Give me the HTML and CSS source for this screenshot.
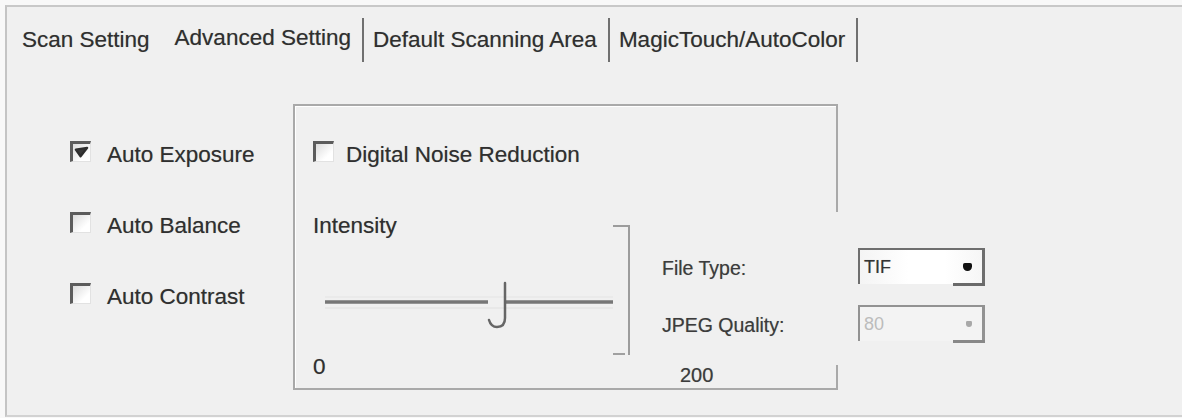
FILE: index.html
```
<!DOCTYPE html>
<html>
<head>
<meta charset="utf-8">
<title>Advanced Setting</title>
<link rel="stylesheet" href="styles.css">
</head>
<body>
<div class="dialog">
  <div class="tabs">
    <span class="tab first">Scan Setting</span>
    <span class="tab active">Advanced Setting</span>
    <span class="sep"></span>
    <span class="tab">Default Scanning Area</span>
    <span class="sep"></span>
    <span class="tab">MagicTouch/AutoColor</span>
    <span class="sep"></span>
  </div>
  <div class="main">
    <div class="auto-col">
      <div class="check-row">
        <span class="box checked"><svg viewBox="0 0 18 18" width="17" height="17"><path d="M3 6 L8 13 L15 4 Z" fill="#3a3a3a" stroke="#2e2e2e" stroke-width="2.4" stroke-linejoin="round"/></svg></span>
        <span>Auto Exposure</span>
      </div>
      <div class="check-row">
        <span class="box"></span>
        <span>Auto Balance</span>
      </div>
      <div class="check-row">
        <span class="box"></span>
        <span>Auto Contrast</span>
      </div>
    </div>
    <div class="group">
      <div class="check-row dnr">
        <span class="box"></span>
        <span>Digital Noise Reduction</span>
      </div>
      <div class="intensity">
        <div class="slider-main">
          <div class="lbl">Intensity</div>
          <svg class="track" viewBox="0 0 300 111" width="300" height="111">
            <line x1="12" y1="53" x2="300" y2="53" stroke="#e8e8e8" stroke-width="1.5"/>
            <line x1="12" y1="64" x2="300" y2="64" stroke="#e6e6e6" stroke-width="1.5"/>
            <line x1="12" y1="58" x2="175" y2="58" stroke="#777777" stroke-width="3.5"/>
            <line x1="192" y1="58" x2="300" y2="58" stroke="#777777" stroke-width="3.5"/>
            <path d="M192 39 V74 Q192 83 184 83 Q178 83 176 76" fill="none" stroke="#666666" stroke-width="2.5" stroke-linecap="round"/>
          </svg>
        </div>
        <div class="bracket"></div>
      </div>
      <div class="scale">
        <span class="min">0</span>
        <span class="max">200</span>
      </div>
    </div>
    <div class="output-panel">
      <span class="out-label">File Type:</span>
      <div class="combo"><span>TIF</span><span class="arrow"></span></div>
      <span class="out-label">JPEG Quality:</span>
      <div class="combo disabled"><span>80</span><span class="arrow"></span></div>
    </div>
  </div>
</div>
</body>
</html>
```
FILE: styles.css
```
html, body {
  margin: 0;
  padding: 0;
}
body {
  width: 1182px;
  height: 418px;
  overflow: hidden;
  background: #f8f8f8;
  font-family: "Liberation Sans", Arial, sans-serif;
  font-size: 22.5px;
  color: #2f2f2f;
  text-shadow: 0 0 0.7px rgba(0, 0, 0, 0.35);
}
.dialog {
  margin: 5px 0 0 5px;
  height: 412px;
  box-sizing: border-box;
  border-top: 2px solid #c8c8c8;
  border-left: 2px solid #c4c4c4;
  border-bottom: 2px solid #d2d2d2;
  background: #f0f0f0;
}
.tabs {
  display: flex;
  align-items: stretch;
  height: 44px;
  padding: 11px 0 0 15px;
}
.tab {
  line-height: 44px;
  white-space: nowrap;
}
.tab.first {
  margin-right: 25px;
}
.tab.active {
  line-height: 40px;
}
.sep {
  width: 2px;
  background: #707070;
  margin: 0 9px 0 11px;
}
.main {
  position: relative;
  display: flex;
  align-items: flex-start;
  padding-top: 42px;
}
.auto-col {
  margin-left: 63px;
  width: 223px;
  display: flex;
  flex-direction: column;
  gap: 35px;
  padding-top: 33px;
}
.check-row {
  display: flex;
  align-items: center;
  height: 36px;
  gap: 16px;
  white-space: nowrap;
}
.box {
  width: 21px;
  height: 21px;
  flex: none;
  box-sizing: border-box;
  margin-bottom: 8px;
  border-top: 3px solid #5c5c5c;
  border-left: 3px solid #5c5c5c;
  border-right: 1px solid #e2e2e2;
  border-bottom: 1px solid #e2e2e2;
  background: linear-gradient(135deg, #dcdcdc, #ffffff 70%);
  display: flex;
  align-items: center;
  justify-content: center;
}
.box svg {
  display: block;
}
.group {
  width: 545px;
  box-sizing: border-box;
  border: 2px solid #a9a9a9;
  box-shadow: inset 1px 1px 0 #ffffff;
  padding: 31px 0 9px 18px;
  display: flex;
  flex-direction: column;
}
.dnr {
  gap: 12px;
}
.intensity {
  display: flex;
  margin-top: 35px;
}
.slider-main {
  width: 300px;
}
.lbl {
  height: 36px;
  line-height: 36px;
}
.track {
  display: block;
}
.bracket {
  position: relative;
  width: 17px;
  height: 130px;
  margin-top: 17px;
  box-sizing: border-box;
  border-top: 2px solid #9c9c9c;
  border-right: 2px solid #9c9c9c;
}
.bracket::after {
  content: "";
  position: absolute;
  left: 0;
  bottom: 0;
  width: 12px;
  height: 2px;
  background: #a0a0a0;
}
.scale {
  display: flex;
  height: 24px;
  line-height: 24px;
}
.min {
  width: 367px;
}
.max {
  padding-top: 8px;
  font-size: 20px;
  color: #3c3c3c;
}
.output-panel {
  position: absolute;
  left: 638px;
  top: 150px;
  width: 360px;
  height: 153px;
  box-sizing: border-box;
  background: #f0f0f0;
  padding: 36px 0 0 17px;
  display: grid;
  grid-template-columns: 196px 127px;
  grid-auto-rows: 36px;
  row-gap: 21px;
  align-content: start;
}
.out-label {
  font-size: 19.5px;
  color: #3c3c3c;
  align-self: center;
  padding-top: 5px;
  white-space: nowrap;
}
.combo {
  position: relative;
  display: flex;
  align-items: center;
  justify-content: space-between;
  box-sizing: border-box;
  border-top: 2px solid #6e6e6e;
  border-left: 2px solid #6e6e6e;
  border-right: 3px solid #6e6e6e;
  background: linear-gradient(90deg, #f4f4f4, #ffffff 40%, #ffffff 70%, #f6f6f6);
  padding: 0 10px 0 4px;
  font-size: 18px;
  color: #333;
}
.combo::after {
  content: "";
  position: absolute;
  right: -3px;
  bottom: -2px;
  width: 32px;
  height: 3px;
  background: #6a6a6a;
}
.arrow {
  width: 9px;
  height: 8px;
  border-radius: 2px 2px 5px 5px;
  background: #111;
}
.combo.disabled {
  border-color: #929292;
  background: #f3f3f3;
  color: #bcbcbc;
  text-shadow: none;
}
.combo.disabled::after {
  background: #888;
}
.combo.disabled .arrow {
  width: 6px;
  height: 6px;
  background: #a8a8a8;
}
```
